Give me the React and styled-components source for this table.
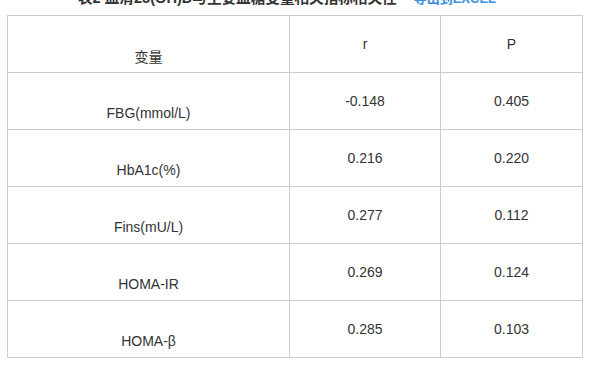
import React from 'react'
import styled, { createGlobalStyle } from 'styled-components'

const GlobalStyle = createGlobalStyle`
  html, body {
    margin: 0;
    padding: 0;
    background: #fff;
    overflow: hidden;
  }
  body {
    font-family: "Liberation Sans", Arial, "Noto Sans CJK SC", sans-serif;
    color: #333;
  }
`

const rows = [
  { name: 'FBG(mmol/L)', r: '-0.148', p: '0.405' },
  { name: 'HbA1c(%)', r: '0.216', p: '0.220' },
  { name: 'Fins(mU/L)', r: '0.277', p: '0.112' },
  { name: 'HOMA-IR', r: '0.269', p: '0.124' },
  { name: 'HOMA-β', r: '0.285', p: '0.103' },
]

const App = () => {
  return (
    <Wrapper>
      <GlobalStyle />
      <Caption>
        <Title>表2 血清25(OH)D与主要血糖变量相关指标相关性</Title>
        <ExportLink href="#">导出到EXCEL</ExportLink>
      </Caption>
      <Table>
        <colgroup>
          <col style={{ width: 282 }} />
          <col style={{ width: 151 }} />
          <col style={{ width: 142 }} />
        </colgroup>
        <tbody>
          <Row>
            <Cell $name>变量</Cell>
            <Cell>r</Cell>
            <Cell>P</Cell>
          </Row>
          {rows.map((row) => (
            <Row key={row.name}>
              <Cell $name>{row.name}</Cell>
              <Cell>{row.r}</Cell>
              <Cell>{row.p}</Cell>
            </Row>
          ))}
        </tbody>
      </Table>
    </Wrapper>
  )
}

export default App

const Wrapper = styled.div`
  padding: 0 7px;
  margin-top: -12px;
`

const Caption = styled.div`
  display: flex;
  align-items: baseline;
  padding-left: 71px;
  height: 21px;
  line-height: 21px;
  margin-bottom: 6px;
  font-weight: bold;
  font-family: "Liberation Sans", Arial, "Noto Sans CJK SC", sans-serif;
  white-space: nowrap;
`

const Title = styled.span`
  font-size: 14.6px;
  color: #333;
  margin-right: 17px;
`

const ExportLink = styled.a`
  color: #3b8fe0;
  text-decoration: none;
  font-size: 13px;
`

const Table = styled.table`
  width: 575px;
  table-layout: fixed;
  border-collapse: collapse;
  border: 1px solid #cccccc;
`

const Row = styled.tr`
  height: 57px;
`

const Cell = styled.td`
  border: 1px solid #cccccc;
  padding: ${(p) => (p.$name ? '24px 0 0' : '0')};
  text-align: center;
  vertical-align: middle;
  font-size: 14px;
  color: #333;
  font-family: "Liberation Sans", Arial, "Noto Sans CJK SC", sans-serif;
`
